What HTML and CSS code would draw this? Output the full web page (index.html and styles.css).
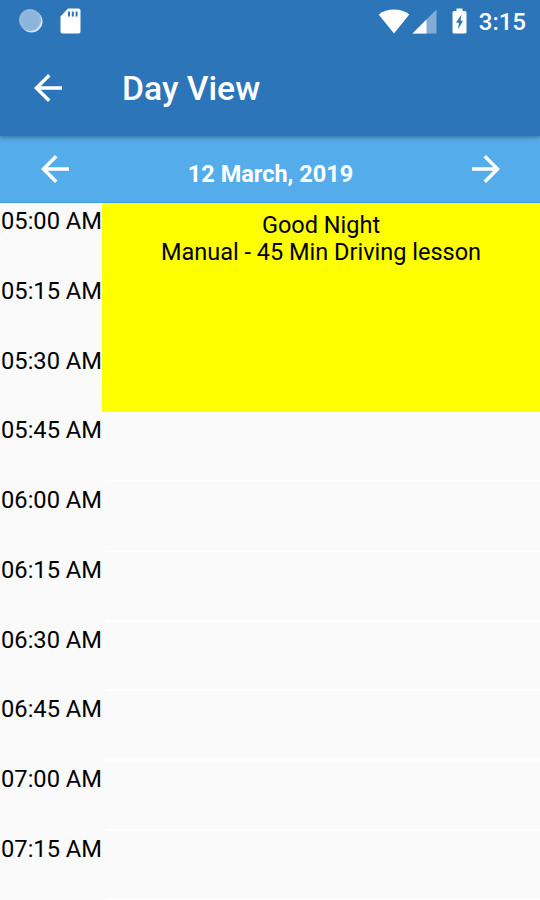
FILE: index.html
```html
<!DOCTYPE html>
<html lang="en">
<head>
    <meta charset="UTF-8">
    <meta name="viewport" content="width=device-width, initial-scale=1.0">
    <title>Day View</title>
    <link rel="stylesheet" href="styles.css">
</head>
<body>
    <header class="app-header">
        <div class="status-bar">
            <div class="status-left">
                <svg class="icon-sync" width="26" height="26" viewBox="0 0 26 26">
                    <circle cx="13.5" cy="13.5" r="11" fill="#d5e6f6"/>
                    <circle cx="12" cy="12" r="11" fill="#8db4da"/>
                    <circle cx="12" cy="12" r="9.5" fill="none" stroke="#a3c4e3" stroke-dasharray="2 1.5"/>
                </svg>
                <svg class="icon-sd" width="21" height="26" viewBox="0 0 21 26">
                    <path fill="#fff" fill-rule="evenodd" d="M8 0.5h10.500a2 2 0 0 1 2 2v21a2 2 0 0 1-2 2h-16a2 2 0 0 1-2-2v-15zM8 3.500v5h2v-5zM11.800 3.500v5h2v-5zM15.600 3.500v5h2v-5z"/>
                </svg>
            </div>
            <div class="status-right">
                <svg class="icon-wifi" width="32" height="25" viewBox="0 0 32 25">
                    <path fill="#fff" d="M16 24.500L0.700 5.500C9 -1.200 23 -1.200 31.300 5.500z"/>
                </svg>
                <svg class="icon-signal" width="25" height="25" viewBox="0 0 25 25">
                    <path fill="#82add8" d="M0.500 24.500L24.500 0.500v24z"/>
                    <path fill="#fff" d="M0.500 24.500L14.500 10.500v14z"/>
                </svg>
                <svg class="icon-battery" width="15" height="26" viewBox="0 0 15 26">
                    <path fill="#fff" d="M4.500 0.500h6v2.500h2.500a1.500 1.500 0 0 1 1.500 1.500v19.500a1.500 1.500 0 0 1-1.500 1.500h-11a1.500 1.500 0 0 1-1.500-1.500v-19.500a1.500 1.500 0 0 1 1.500-1.500h2.500z"/>
                    <path fill="#2d75b9" d="M9.500 6.500L4 14.800h3L6 21.500L11 12.800H8.500z"/>
                </svg>
                <span class="clock">3:15</span>
            </div>
        </div>
        <div class="toolbar">
            <svg class="arrow" viewBox="0 0 24 24"><path d="M20 11H7.830l5.590-5.590L12 4l-8 8 8 8 1.410-1.410L7.830 13H20v-2z"/></svg>
            <h1>Day View</h1>
        </div>
    </header>

    <nav class="date-bar">
        <svg class="arrow" viewBox="0 0 24 24"><path d="M20 11H7.830l5.590-5.590L12 4l-8 8 8 8 1.410-1.410L7.830 13H20v-2z"/></svg>
        <span class="date">12 March, 2019</span>
        <svg class="arrow" viewBox="0 0 24 24"><path d="M12 4l-1.410 1.410L16.170 11H4v2h12.170l-5.580 5.590L12 20l8-8z"/></svg>
    </nav>

    <main class="schedule">
        <div class="times">
            <div class="time">05:00 AM</div>
            <div class="time">05:15 AM</div>
            <div class="time">05:30 AM</div>
            <div class="time">05:45 AM</div>
            <div class="time">06:00 AM</div>
            <div class="time">06:15 AM</div>
            <div class="time">06:30 AM</div>
            <div class="time">06:45 AM</div>
            <div class="time">07:00 AM</div>
            <div class="time">07:15 AM</div>
        </div>
        <div class="slots">
            <div class="event">
                <div>Good Night</div>
                <div>Manual - 45 Min Driving lesson</div>
            </div>
            <div class="slot"></div>
            <div class="slot"></div>
            <div class="slot"></div>
            <div class="slot"></div>
            <div class="slot"></div>
            <div class="slot"></div>
            <div class="slot"></div>
        </div>
    </main>
</body>
</html>
```

FILE: styles.css
```css
* {
    box-sizing: border-box;
}

body {
    margin: 0;
    height: 900px;
    overflow: hidden;
    display: flex;
    flex-direction: column;
    font-family: Roboto, sans-serif;
    background-color: #fafafa;
    color: #000;
}

svg {
    display: block;
    flex-shrink: 0;
}

.app-header {
    height: 136px;
    flex-shrink: 0;
    background-color: #2d75b9;
    color: #fff;
    position: relative;
    box-shadow: 0 1px 5px rgba(0, 0, 0, 0.4);
}

.status-bar {
    height: 42px;
    padding: 0 14px 0 18px;
    display: flex;
    justify-content: space-between;
    align-items: center;
}

.status-left,
.status-right {
    display: flex;
    align-items: center;
}

.icon-sd {
    margin-left: 16px;
}

.icon-signal {
    margin-left: 2px;
}

.icon-battery {
    margin: 0 12px 0 15px;
}

.clock {
    font-size: 24px;
    font-weight: 500;
    line-height: 28px;
    padding-top: 2px;
}

.toolbar {
    height: 92px;
    padding-left: 27px;
    display: flex;
    align-items: center;
}

.toolbar h1 {
    margin: 0 0 0 53px;
    padding-top: 1px;
    font-size: 33.7px;
    font-weight: 500;
    line-height: 40px;
}

.arrow {
    width: 42px;
    height: 42px;
    fill: #fff;
}

.date-bar {
    height: 67px;
    flex-shrink: 0;
    padding: 0 33px 0 34px;
    display: flex;
    justify-content: space-between;
    align-items: center;
    background-color: #55acea;
    border-bottom: 1px solid #3c9de0;
    color: #fff;
}

.date {
    font-size: 23.5px;
    font-weight: 700;
    line-height: 28px;
    padding-top: 9px;
}

.schedule {
    display: grid;
    grid-template-columns: 102px 1fr;
    font-size: 23.5px;
    line-height: 27px;
}

.times,
.slots {
    display: grid;
    grid-template-rows: repeat(10, 69.75px);
}

.time {
    padding: 5px 0 0 1px;
    font-size: 23.7px;
    white-space: nowrap;
}

.event {
    grid-row: span 3;
    padding-top: 9px;
    background-color: #ff0;
    text-align: center;
}

.slot {
    margin-left: 3px;
    border-bottom: 2px solid #fefefe;
}
```
